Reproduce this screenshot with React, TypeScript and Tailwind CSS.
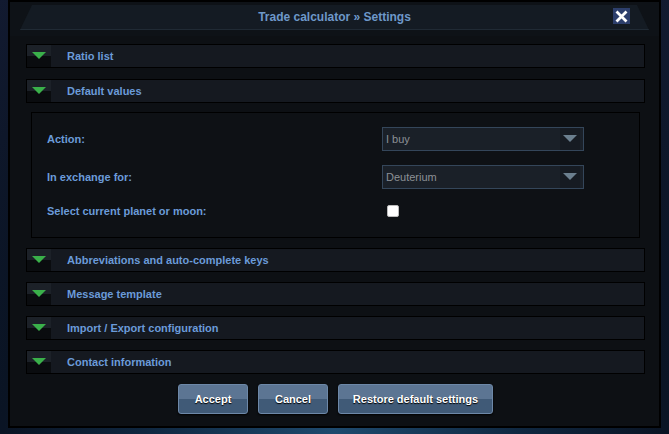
import React from "react";

const Header = ({ label }: { label: string }) => (
  <div className="flex h-[24px] items-stretch border border-black bg-[#151920]">
    <div className="flex w-[24px] items-center justify-center bg-gradient-to-b from-[#1c2128] from-50% to-[#0a0c0f] to-50%">
      <svg width="14" height="8" viewBox="0 0 14 8">
        <polygon points="0,0 14,0 7,7" fill="#3ab04a" />
      </svg>
    </div>
    <div className="flex items-center pl-[16px] text-[11px] font-bold text-[#6b9bd9]">{label}</div>
  </div>
);

const Select = ({ value }: { value: string }) => (
  <div className="flex h-[24px] w-[202px] items-center justify-between border border-[#34465a] bg-[#1a2028] pl-[3px] text-[11px] font-normal text-[#8c9096]">
    <span>{value}</span>
    <div className="flex h-full w-[20px] items-center justify-center bg-[#161b22] mr-[3px]">
      <svg width="14" height="8" viewBox="0 0 14 8">
        <polygon points="0,0 14,0 7,7" fill="#6b7f8e" />
      </svg>
    </div>
  </div>
);

const Btn = ({ label, w }: { label: string; w: string }) => (
  <button
    className={`h-[30px] ${w} rounded-[3px] border border-[#6d88a8] bg-gradient-to-b from-[#5c7593] from-50% to-[#405a77] to-50% text-[11px] font-bold text-white [text-shadow:0_1px_1px_#000] shadow-[0_1px_2px_#000]`}
  >
    {label}
  </button>
);

export default function App() {
  return (
    <div
      className="relative h-[434px] w-[669px] overflow-hidden bg-[radial-gradient(ellipse_at_50%_100%,#1e4a6e_0%,#0f2740_40%,#0a1424_70%,#121a30_100%)]"
      style={{ fontFamily: '"Liberation Sans", Arial, sans-serif' }}
    >
      <div className="ml-[8px] flex h-[428px] w-[653px] flex-col border-2 border-black bg-[#0d1014]">
        <div className="flex h-[34px] items-start bg-[#0e1217] px-[10px] pt-[3px]">
          <div className="relative flex h-[25px] flex-1 items-center justify-center bg-[#141b23] border-b border-[#202a34] [clip-path:polygon(12px_0,calc(100%-12px)_0,100%_100%,0_100%)]">
            <span className="text-[12px] font-bold text-[#6e98c9]">Trade calculator » Settings</span>
            <div className="absolute right-[19px] top-[3px] flex h-[16px] w-[17px] items-center justify-center bg-[#2d3f6c]">
              <svg width="13" height="13" viewBox="0 0 13 13">
                <path d="M1.5 1.5 L11.5 11.5 M11.5 1.5 L1.5 11.5" stroke="#fff" strokeWidth="2.8" />
              </svg>
            </div>
          </div>
        </div>
        <div className="flex flex-col pl-[16px] pr-[14px] pt-[8px]">
          <Header label="Ratio list" />
          <div className="mt-[11px]">
            <Header label="Default values" />
          </div>
          <div className="mx-[5px] mt-[9px] flex h-[126px] flex-col border border-black bg-[#0e1115] px-[15px] pt-[14px] text-[11px] font-bold text-[#6b9bd9]">
            <div className="flex items-center justify-between pr-[40px]">
              <span>Action:</span>
              <Select value="I buy" />
            </div>
            <div className="mt-[14px] flex items-center justify-between pr-[40px]">
              <span>In exchange for:</span>
              <Select value="Deuterium" />
            </div>
            <div className="mt-[14px] flex items-center">
              <span className="w-[340px]">Select current planet or moon:</span>
              <div className="ml-[0px] h-[12px] w-[12px] rounded-[2px] border border-[#bbb] bg-white" />
            </div>
          </div>
          <div className="mt-[10px] flex flex-col gap-[10px]">
            <Header label="Abbreviations and auto-complete keys" />
            <Header label="Message template" />
            <Header label="Import / Export configuration" />
            <Header label="Contact information" />
          </div>
          <div className="mt-[10px] flex justify-center gap-[10px]">
            <Btn label="Accept" w="w-[70px]" />
            <Btn label="Cancel" w="w-[70px]" />
            <Btn label="Restore default settings" w="w-[155px]" />
          </div>
        </div>
      </div>
    </div>
  );
}
